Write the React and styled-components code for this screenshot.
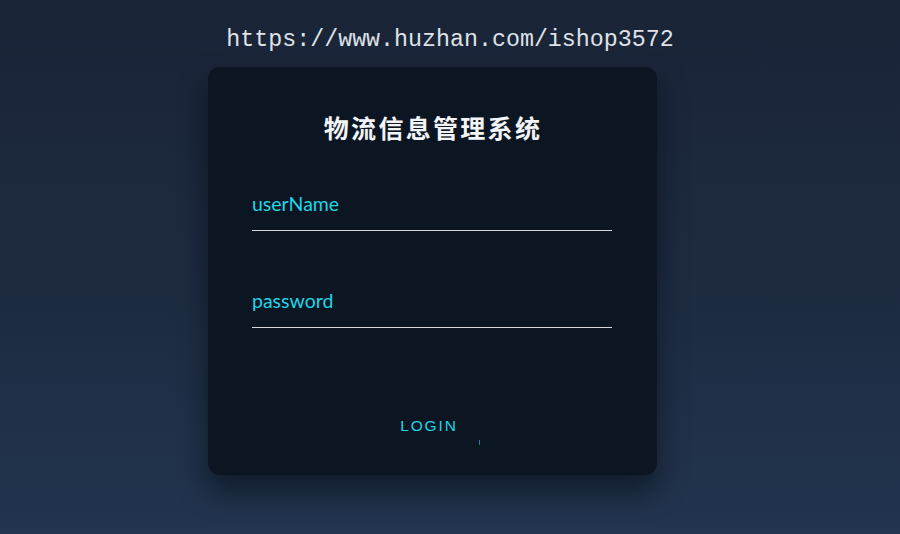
import React from "react";
import styled, { createGlobalStyle } from "styled-components";

const Global = createGlobalStyle`
  html, body { margin: 0; padding: 0; }
  body {
    width: 900px;
    height: 534px;
    overflow: hidden;
    background: linear-gradient(180deg, #1a2437 0%, #1d2a40 50%, #22344e 100%);
  }
`;

const Page = styled.div`
  width: 900px;
  height: 534px;
  display: flex;
  flex-direction: column;
  align-items: center;
`;

const Url = styled.div`
  font-family: "Liberation Mono", "DejaVu Sans Mono", monospace;
  font-size: 23.3px;
  line-height: 32px;
  color: #dfe2e6;
  margin-top: 24px;
  height: 43px;
`;

const Card = styled.div`
  width: 449px;
  height: 408px;
  margin-right: 35px;
  background: #0c1522;
  border-radius: 12px;
  box-shadow: 0 16px 28px rgba(5, 10, 18, 0.55);
  box-sizing: border-box;
  padding: 44px 45px 0 44px;
  display: flex;
  flex-direction: column;
  position: relative;
`;

const Title = styled.h1`
  margin: 0;
  font-family: "Noto Sans CJK SC", "Noto Sans", sans-serif;
  font-weight: 700;
  font-size: 25px;
  letter-spacing: 2.3px;
  line-height: 32px;
  color: #f2f4f7;
  text-align: center;
  padding-left: 2px;
`;

const Field = styled.div`
  margin-top: ${({ top }) => top}px;
  border-bottom: 1px solid #d6d8dc;
  height: 38px;
  box-sizing: content-box;
  display: flex;
  align-items: flex-start;
  padding-top: 8px;
`;

const Input = styled.input`
  border: none;
  outline: none;
  background: transparent;
  width: 100%;
  padding: 0;
  height: 24px;
  line-height: 24px;
  font-family: "Lato", "Open Sans", sans-serif;
  font-size: 19.5px;
  color: #1fd6e6;
  &::placeholder { color: #1fd6e6; opacity: 1; }
`;

const LoginButton = styled.button`
  margin-top: 89px;
  align-self: center;
  background: transparent;
  border: none;
  padding: 0;
  margin-right: 6px;
  font-family: "Liberation Sans", Arial, sans-serif;
  font-size: 15.5px;
  line-height: 18px;
  letter-spacing: 1.9px;
  color: #1fd6e6;
`;

const Tick = styled.span`
  position: absolute;
  left: 271px;
  top: 373px;
  width: 1px;
  height: 5px;
  background: #1f7fa0;
`;

export default function App() {
  return (
    <>
      <Global />
      <Page>
        <Url>https://www.huzhan.com/ishop3572</Url>
        <Card>
          <Title>物流信息管理系统</Title>
          <Field top={41}>
            <Input placeholder="userName" />
          </Field>
          <Field top={50}>
            <Input placeholder="password" type="password" />
          </Field>
          <LoginButton>LOGIN</LoginButton>
          <Tick />
        </Card>
      </Page>
    </>
  );
}
